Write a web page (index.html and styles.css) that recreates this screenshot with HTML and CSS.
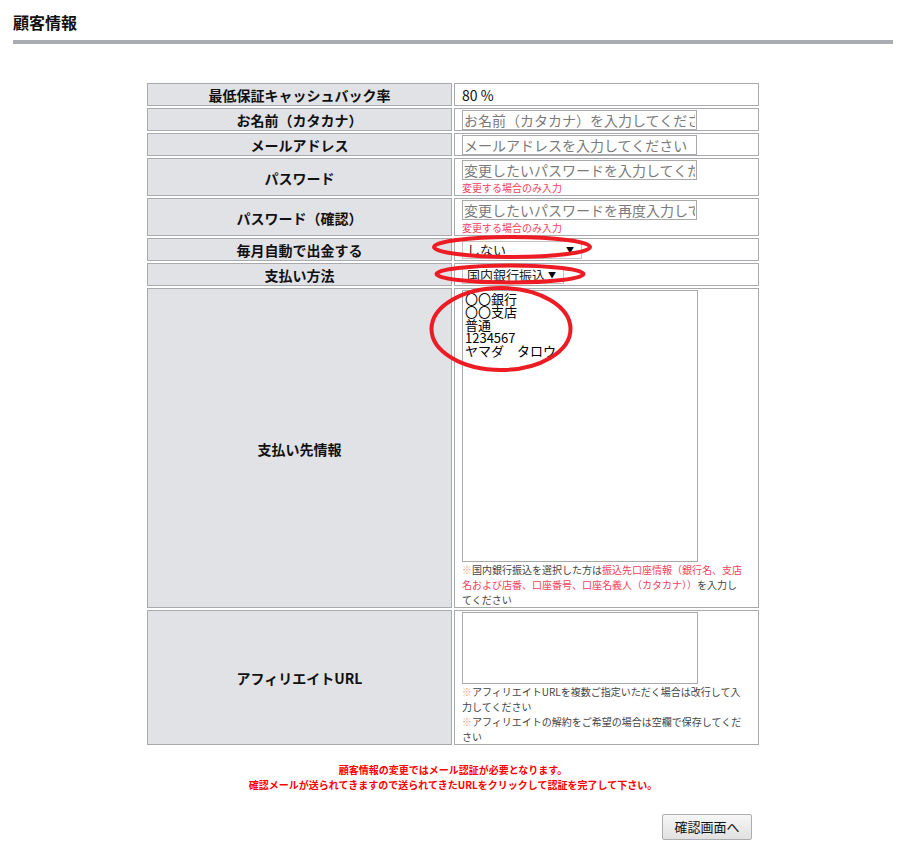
FILE: index.html
```html
<!DOCTYPE html>
<html lang="ja">
<head>
<meta charset="utf-8">
<title>顧客情報</title>
<link rel="stylesheet" href="styles.css">
</head>
<body>
<div class="page">
  <h1 class="title">顧客情報</h1>
  <table class="form">
    <tr class="row-short">
      <th>最低保証キャッシュバック率</th>
      <td><span class="value">80 %</span></td>
    </tr>
    <tr>
      <th>お名前（カタカナ）</th>
      <td><input class="field" type="text" placeholder="お名前（カタカナ）を入力してください"></td>
    </tr>
    <tr>
      <th>メールアドレス</th>
      <td><input class="field" type="text" placeholder="メールアドレスを入力してください"></td>
    </tr>
    <tr>
      <th>パスワード</th>
      <td><input class="field" type="password" placeholder="変更したいパスワードを入力してください"><div class="hint">変更する場合のみ入力</div></td>
    </tr>
    <tr>
      <th>パスワード（確認）</th>
      <td><input class="field" type="password" placeholder="変更したいパスワードを再度入力してください"><div class="hint">変更する場合のみ入力</div></td>
    </tr>
    <tr>
      <th>毎月自動で出金する</th>
      <td><div class="select-wrap"><select class="select select-auto"><option>しない</option><option>する</option></select></div></td>
    </tr>
    <tr>
      <th>支払い方法</th>
      <td><div class="select-wrap"><select class="select select-pay"><option>国内銀行振込</option></select></div></td>
    </tr>
    <tr>
      <th>支払い先情報</th>
      <td>
        <textarea class="area area-pay">〇〇銀行
〇〇支店
普通
1234567
ヤマダ　タロウ</textarea>
        <div class="note">
          <div class="line"><span class="mark">※</span>国内銀行振込を選択した方は<span class="red">振込先口座情報（銀行名、支店</span></div>
          <div class="line"><span class="red">名および店番、口座番号、口座名義人（カタカナ））</span>を入力し</div>
          <div class="line">てください</div>
        </div>
      </td>
    </tr>
    <tr>
      <th>アフィリエイトURL</th>
      <td>
        <textarea class="area area-aff"></textarea>
        <div class="note">
          <div class="line"><span class="mark">※</span>アフィリエイトURLを複数ご指定いただく場合は改行して入</div>
          <div class="line">力してください</div>
          <div class="line"><span class="mark">※</span>アフィリエイトの解約をご希望の場合は空欄で保存してくだ</div>
          <div class="line">さい</div>
        </div>
      </td>
    </tr>
  </table>
  <div class="notice">
    <p class="notice-line">顧客情報の変更ではメール認証が必要となります。</p>
    <p class="notice-line">確認メールが送られてきますので送られてきたURLをクリックして認証を完了して下さい。</p>
  </div>
  <div class="actions"><button class="btn" type="button">確認画面へ</button></div>
</div>
<svg class="marks" width="899" height="853" viewBox="0 0 899 853" aria-hidden="true">
  <ellipse cx="512" cy="247" rx="78" ry="10" />
  <ellipse cx="510" cy="274" rx="73.5" ry="8.5" />
  <ellipse cx="501" cy="329" rx="69.5" ry="41" />
</svg>
</body>
</html>
```

FILE: styles.css
```css
html, body {
  margin: 0;
  padding: 0;
  background: #ffffff;
}

body {
  font-family: "Noto Sans CJK JP", "Noto Sans", sans-serif;
  color: #111111;
  position: relative;
}

.page {
  margin: 0 6px 0 13px;
}

.title {
  margin: 0;
  padding: 11px 0 7px;
  font-size: 16px;
  line-height: 22px;
  font-weight: bold;
  color: #111111;
  border-bottom: 4px solid #aaacb4;
}

.form {
  width: 616px;
  margin: 37px auto 0;
  border-collapse: separate;
  border-spacing: 2px;
  table-layout: fixed;
}

.form th,
.form td {
  width: 50%;
  border: 1px solid #a9aaae;
  padding: 1px 7px 0;
  vertical-align: middle;
  line-height: 10px;
}

.form th {
  background: #e1e2e6;
  font-size: 14px;
  line-height: 18px;
  font-weight: bold;
  text-align: center;
  color: #111111;
}

.form td {
  background: #ffffff;
  text-align: left;
}

.value {
  display: block;
  font-size: 14px;
  line-height: 20px;
  color: #111111;
}

.field {
  display: block;
  box-sizing: border-box;
  width: 235px;
  height: 20px;
  margin: 0;
  padding: 0 1px;
  border: 1px solid #a9a9a9;
  font-family: "Noto Sans CJK JP", sans-serif;
  font-size: 14px;
  line-height: 18px;
  color: #111111;
  background: #ffffff;
}

.field::placeholder {
  color: #7a7a7a;
  opacity: 1;
}

.hint {
  font-size: 10px;
  line-height: 15px;
  color: #f5405a;
}

.select-wrap {
  position: relative;
  display: block;
  width: max-content;
  padding: 1px 0 1px;
}

.select-wrap::after {
  content: "▼";
  position: absolute;
  right: 8px;
  top: 5px;
  font-size: 8px;
  line-height: 10px;
  color: #000000;
  pointer-events: none;
}

.select {
  -webkit-appearance: none;
  appearance: none;
  display: block;
  box-sizing: border-box;
  height: 18px;
  margin: 0;
  padding: 0 18px 0 4px;
  border: 1px solid #c4c4c4;
  border-radius: 0;
  background: #ffffff;
  font-family: "Noto Sans CJK JP", sans-serif;
  font-size: 13px;
  line-height: 16px;
  color: #222222;
}

.select-auto {
  width: 120px;
}

.select-pay {
  width: 102px;
  padding-right: 12px;
}

.area {
  display: block;
  box-sizing: border-box;
  width: 236px;
  margin: 0;
  padding: 1px 2px;
  border: 1px solid #a9a9a9;
  resize: none;
  font-family: "Noto Sans CJK JP", sans-serif;
  font-size: 13px;
  line-height: 13px;
  color: #000000;
  background: #ffffff;
  overflow: hidden;
}

.area-pay {
  height: 272px;
}

.area-aff {
  height: 72px;
}

.note {
  font-size: 10px;
  line-height: 15px;
  color: #444444;
}

.note .line {
  white-space: nowrap;
}

.note .red {
  color: #f5405a;
}

.note .mark {
  color: #e9a27e;
}

.notice {
  margin: 15px 0 0;
  text-align: center;
  font-size: 10px;
  line-height: 15px;
  font-weight: bold;
  color: #ff0000;
}

.notice-line {
  margin: 0;
}

.actions {
  width: 616px;
  margin: 22px auto 0;
  box-sizing: border-box;
  padding-right: 9px;
  display: flex;
  justify-content: flex-end;
}

.btn {
  box-sizing: border-box;
  width: 90px;
  height: 26px;
  padding: 0;
  border: 1px solid #adadad;
  border-radius: 2px;
  background: linear-gradient(#f6f6f6, #e1e1e1);
  font-family: "Noto Sans CJK JP", sans-serif;
  font-size: 13px;
  line-height: 24px;
  color: #111111;
}

.marks {
  position: absolute;
  top: 0;
  left: 0;
  pointer-events: none;
}

.marks ellipse {
  fill: none;
  stroke: #ed1c24;
  stroke-width: 4;
}
```
